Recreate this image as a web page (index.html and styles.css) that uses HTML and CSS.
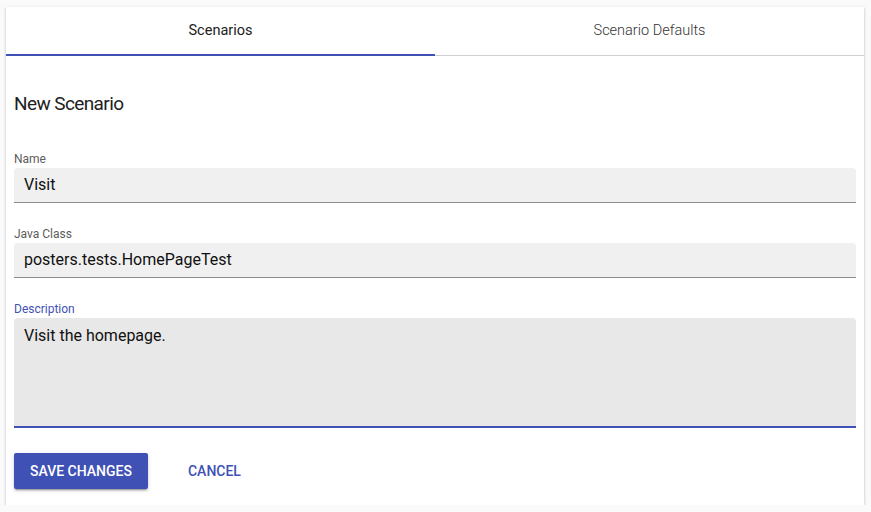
FILE: index.html
```html
<!DOCTYPE html>
<html lang="en">
<head>
<meta charset="utf-8">
<title>New Scenario</title>
<link rel="stylesheet" href="styles.css">
</head>
<body>
<div class="card">
  <div class="tabs">
    <div class="tab tab-active">Scenarios</div>
    <div class="tab">Scenario Defaults</div>
  </div>
  <div class="content">
    <h2 class="title">New Scenario</h2>
    <div class="fields">
      <div class="field">
        <label class="label">Name</label>
        <div class="input">Visit</div>
      </div>
      <div class="field">
        <label class="label">Java Class</label>
        <div class="input">posters.tests.HomePageTest</div>
      </div>
      <div class="field">
        <label class="label label-focus">Description</label>
        <div class="input textarea">Visit the homepage.</div>
      </div>
    </div>
    <div class="actions">
      <button class="btn btn-primary">Save Changes</button>
      <button class="btn btn-flat">Cancel</button>
    </div>
  </div>
</div>
</body>
</html>
```

FILE: styles.css
```css
html, body {
  margin: 0;
  padding: 0;
  background: #fafafa;
  font-family: Roboto, "Liberation Sans", sans-serif;
  color: #212121;
}

.card {
  margin: 7px 0 0 6px;
  width: 858px;
  background: #fff;
  box-shadow: 0 1px 3px rgba(0,0,0,.2), 0 1px 1px rgba(0,0,0,.14), 0 2px 1px -1px rgba(0,0,0,.12);
}

.tabs {
  display: flex;
  height: 48px;
  border-bottom: 1px solid #cfcfcf;
}

.tab {
  flex: 1;
  display: flex;
  align-items: center;
  justify-content: center;
  font-size: 14.5px;
  font-weight: 300;
  color: #333;
  box-sizing: border-box;
  padding-bottom: 1px;
}

.tab-active {
  font-weight: 400;
  color: #212121;
  border-bottom: 2px solid #3f51b5;
  margin-bottom: -1px;
  padding-bottom: 0;
}

.content {
  padding: 36px 8px 16px 8px;
}

.title {
  margin: 0;
  font-size: 19px;
  line-height: 24px;
  letter-spacing: -0.6px;
  font-weight: 400;
  color: #212121;
}

.fields {
  display: flex;
  flex-direction: column;
  gap: 23px;
  margin-top: 35px;
}

.field {
  display: flex;
  flex-direction: column;
  gap: 1px;
}

.label {
  font-size: 12px;
  line-height: 16px;
  color: #5c5c5c;
}

.label-focus {
  color: #3f51b5;
}

.input {
  background: #f0f0f0;
  border-radius: 4px 4px 0 0;
  border-bottom: 1px solid #8c8c8c;
  padding: 7px 10px;
  font-size: 16px;
  line-height: 20px;
  color: #111;
}

.textarea {
  background: #e8e8e8;
  border-bottom: 2px solid #3f51b5;
  height: 100px;
  padding: 8px 10px 0 10px;
}

.actions {
  display: flex;
  gap: 24px;
  margin-top: 25px;
}

.btn {
  font-family: Roboto, "Liberation Sans", sans-serif;
  font-size: 14px;
  font-weight: 500;
  text-transform: uppercase;
  height: 36px;
  padding: 0 16px;
  border: 0;
  border-radius: 2px;
  background: transparent;
  color: #3f51b5;
}

.btn-primary {
  background: #3f51b5;
  color: #fff;
  box-shadow: 0 3px 1px -2px rgba(0,0,0,.2), 0 2px 2px 0 rgba(0,0,0,.14), 0 1px 5px 0 rgba(0,0,0,.12);
}
```
